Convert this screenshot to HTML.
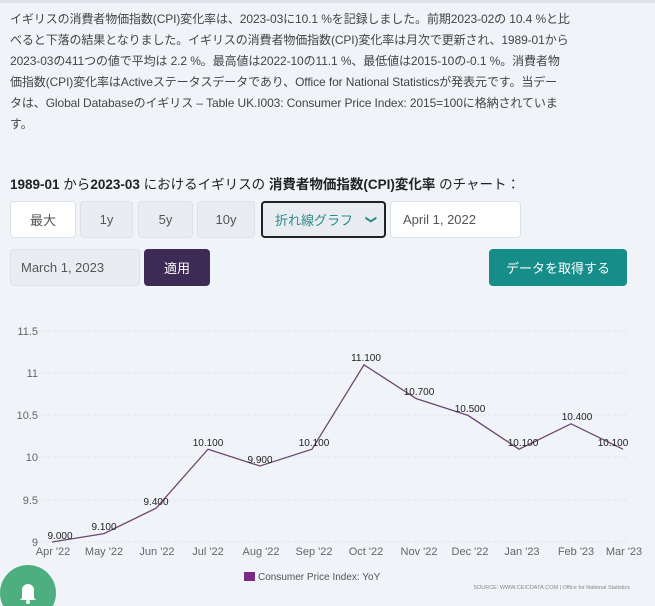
<!DOCTYPE html><html><head><meta charset="utf-8"><style>
body{margin:0;width:655px;height:606px;background:#f0f3f7;font-family:"Liberation Sans","Noto Sans CJK JP",sans-serif;color:#333;position:relative;overflow:hidden}
.top{position:absolute;left:0;top:0;width:655px;height:3px;background:#dfe3e8}
p{position:absolute;left:10px;top:9px;margin:0;font-size:12px;line-height:21px;color:#444;white-space:nowrap;letter-spacing:-0.1px}
h3{position:absolute;left:10px;top:173px;margin:0;font-size:13.5px;font-weight:normal;color:#222}
.b{position:absolute;box-sizing:border-box;border:1px solid #dde2e8;border-radius:4px;font-size:13px;display:flex;align-items:center;justify-content:center;color:#555}
</style></head><body><div class="top"></div>
<p>イギリスの消費者物価指数(CPI)変化率は、2023-03に10.1 %を記録しました。前期2023-02の 10.4 %と比<br>べると下落の結果となりました。イギリスの消費者物価指数(CPI)変化率は月次で更新され、1989-01から<br>2023-03の411つの値で平均は 2.2 %。最高値は2022-10の11.1 %、最低値は2015-10の-0.1 %。消費者物<br>価指数(CPI)変化率はActiveステータスデータであり、Office for National Statisticsが発表元です。当デー<br>タは、Global Databaseのイギリス – Table UK.I003: Consumer Price Index: 2015=100に格納されていま<br>す。</p>
<h3><b>1989-01</b> から<b>2023-03</b> におけるイギリスの <b>消費者物価指数(CPI)変化率</b> のチャート：</h3>
<div class="b" style="left:10px;top:201px;width:66px;height:37px;background:#fff">最大</div>
<div class="b" style="left:80px;top:201px;width:53px;height:37px;background:#e9edf2">1y</div>
<div class="b" style="left:138px;top:201px;width:55px;height:37px;background:#e9edf2">5y</div>
<div class="b" style="left:197px;top:201px;width:58px;height:37px;background:#e9edf2">10y</div>
<div class="b" style="left:261px;top:201px;width:125px;height:37px;background:#e9edf2;border:2px solid #222;justify-content:space-between;padding:0 8px 0 12px;color:#2a8a8a">折れ線グラフ<span style="color:#2a8a8a;font-size:11px;transform:rotate(90deg)">❯</span></div>
<div class="b" style="left:390px;top:201px;width:131px;height:37px;background:#fff;justify-content:flex-start;padding-left:12px">April 1, 2022</div>
<div class="b" style="left:10px;top:249px;width:130px;height:37px;background:#e9edf2;justify-content:flex-start;padding-left:10px">March 1, 2023</div>
<div class="b" style="left:144px;top:249px;width:66px;height:37px;background:#3d2b55;color:#fff;border:none">適用</div>
<div class="b" style="left:489px;top:249px;width:138px;height:37px;background:#178d8a;color:#fff;border:none">データを取得する</div>
<svg style="position:absolute;left:0;top:310px" width="655" height="296" font-family="Liberation Sans,sans-serif">
<g stroke="#e2e6ea" stroke-dasharray="3,2"><line x1="38" x2="628" y1="21" y2="21"/><line x1="38" x2="628" y1="63" y2="63"/><line x1="38" x2="628" y1="105" y2="105"/><line x1="38" x2="628" y1="147" y2="147"/><line x1="38" x2="628" y1="190" y2="190"/><line x1="38" x2="628" y1="232" y2="232"/></g>
<g font-size="11" fill="#666" text-anchor="end"><text x="38" y="25">11.5</text><text x="38" y="67">11</text><text x="38" y="109">10.5</text><text x="38" y="151">10</text><text x="38" y="194">9.5</text><text x="38" y="236">9</text></g>
<polyline fill="none" stroke="#6b4a72" stroke-width="1.3" points="52,232 104,223.6 156,198.2 208,139.2 260,156 312,139.2 364,54.8 416,88.5 468,105.4 519,139.2 571,113.8 623,139.2"/>
<g font-size="10" fill="#222" text-anchor="middle"><text x="60" y="229">9.000</text><text x="104" y="220">9.100</text><text x="156" y="195">9.400</text><text x="208" y="136">10.100</text><text x="260" y="153">9.900</text><text x="314" y="136">10.100</text><text x="366" y="51">11.100</text><text x="419" y="85">10.700</text><text x="470" y="102">10.500</text><text x="523" y="136">10.100</text><text x="577" y="110">10.400</text><text x="613" y="136">10.100</text></g>
<g font-size="11" fill="#666" text-anchor="middle"><text x="53" y="245">Apr '22</text><text x="104" y="245">May '22</text><text x="157" y="245">Jun '22</text><text x="208" y="245">Jul '22</text><text x="261" y="245">Aug '22</text><text x="314" y="245">Sep '22</text><text x="366" y="245">Oct '22</text><text x="419" y="245">Nov '22</text><text x="470" y="245">Dec '22</text><text x="522" y="245">Jan '23</text><text x="576" y="245">Feb '23</text><text x="624" y="245">Mar '23</text></g>
<rect x="244" y="262" width="11" height="9" fill="#7a2c82"/><text x="258" y="270" font-size="10" fill="#555">Consumer Price Index: YoY</text>
<text x="630" y="279" font-size="5.5" fill="#888" text-anchor="end">SOURCE: WWW.CEICDATA.COM | Office for National Statistics</text>
<circle cx="28" cy="283" r="28" fill="#4dae7f"/><path d="M22 288 v-8 a6 6 0 0 1 12 0 v8 l2 2 h-16z" fill="#fff"/><circle cx="28" cy="292" r="2" fill="#fff"/>
</svg>
</body></html>
